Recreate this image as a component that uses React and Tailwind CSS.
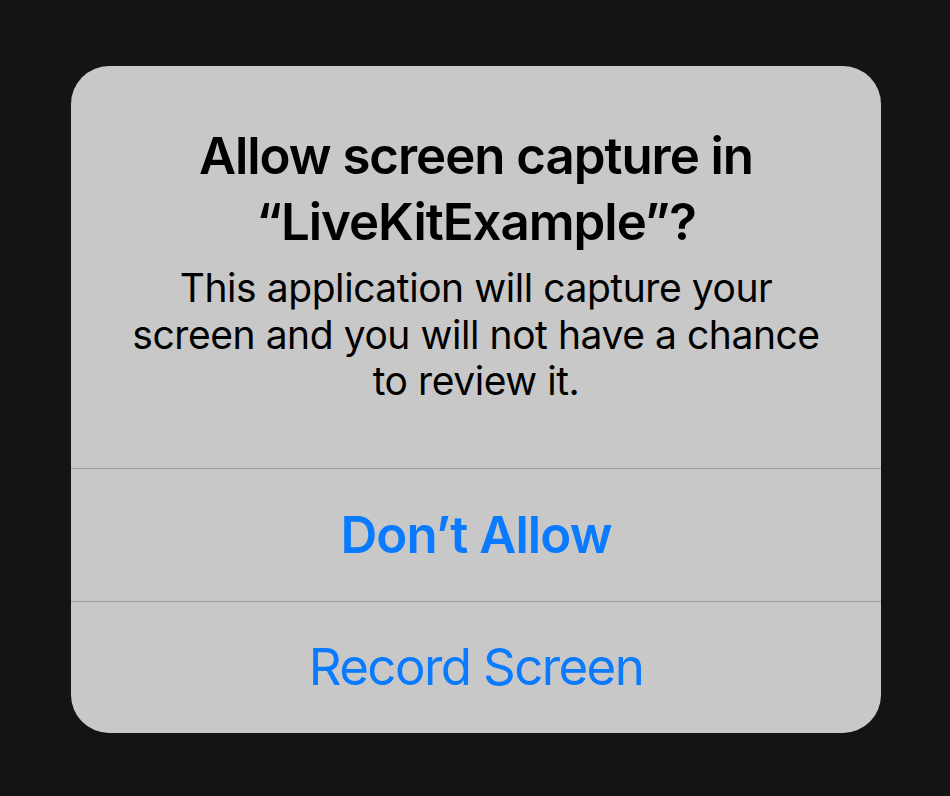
export default function App() {
  return (
    <div className="w-[950px] h-[796px] bg-[#141414] pt-[66px] pl-[71px] font-['Inter','Liberation_Sans',sans-serif]">
      {/* Alert */}
      <div className="w-[810px] h-[667px] bg-[#c8c8c8] rounded-[38px] overflow-hidden flex flex-col">
        <div className="h-[402px] pt-[57px] px-[40px] text-center text-black">
          <h1 className="text-[51px] leading-[66px] font-semibold tracking-[-1.05px]">
            Allow screen capture in
            <br />
            “LiveKitExample”?
          </h1>
          <p className="mt-[10px] text-[39px] leading-[46.5px] tracking-[-0.44px]">
            This application will capture your
            <br />
            screen and you will not have a chance
            <br />
            to review it.
          </p>
        </div>
        <div className="h-px bg-[#9b9b9b]" />
        <button className="h-[132px] flex items-center justify-center text-[51px] font-semibold text-[#0a7aff] tracking-[-0.9px]">
          Don’t Allow
        </button>
        <div className="h-px bg-[#9b9b9b]" />
        <button className="flex-1 flex items-center justify-center text-[51px] text-[#0a7aff] tracking-[-1.6px]">
          Record Screen
        </button>
      </div>
    </div>
  );
}
